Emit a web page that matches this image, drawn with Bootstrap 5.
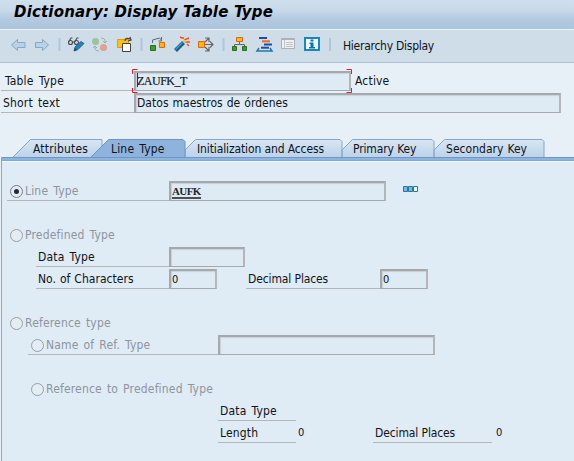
<!DOCTYPE html>
<html lang="en">
<head>
<meta charset="utf-8">
<meta name="viewport" content="width=device-width, initial-scale=1">
<title>Dictionary: Display Table Type</title>
<link href="https://cdn.jsdelivr.net/npm/bootstrap@5.3.0/dist/css/bootstrap.min.css" rel="stylesheet">
<style>
body{width:574px;height:461px;overflow:hidden;background:#e8f0f7;color:#101318;font:12px/16px "DejaVu Sans Condensed","DejaVu Sans",sans-serif;font-stretch:condensed;letter-spacing:.18px;word-spacing:1.4px;white-space:nowrap}
svg{display:block;flex:none}
.titlebar{height:29px;background:linear-gradient(#d0dfed 0,#c8d9e9 35%,#b3cae1 65%,#adc4de);padding:3px 0 0 14px}
.titlebar h1{font:italic bold 15px/19px "DejaVu Sans",sans-serif;font-stretch:normal;color:#000;margin:0;letter-spacing:.18px;word-spacing:0}
.tools{height:34px;background:#cfdde8;border-top:1px solid #edf4fa;border-bottom:1px solid #a9c0d5}
.hier{margin-left:11px;padding-top:8px;letter-spacing:-.26px;word-spacing:0}
.headform{height:76px;padding:6px 0 0 1px}
.frow{height:22px;display:flex;align-items:flex-end}
.lab{height:20px;border-bottom:1px solid #b4b7ba;padding-top:2px;flex:none;display:flex}
.field{height:20px;border:solid #a5a9ad;border-width:2px 2px 1px 2px;border-right-color:#b2b6ba;background:#deebf5;flex:none;padding:0 0 0 1px;box-shadow:inset 1px 1px 1px #c8d2da;position:relative}
.headform .lab{width:133px}
.mono{font:12px/16px "Liberation Serif",serif;letter-spacing:-.5px;-webkit-text-stroke:.2px #24272d}
.corners{position:absolute;left:-4px;top:-4px}
.tabrow{height:18px;position:relative}
.tabrow svg{position:absolute;left:0;top:0}
.tabrow span{position:relative;top:2px;flex:none}
.panel{height:304px;margin-left:1px;border-left:1px solid #88a9cb;background:linear-gradient(#6f97c4 1px,#8eb3dc 1px,#8eb3dc 3px,#83a8d2 3px,#83a8d2 4px,#f2f7fb 4px,#f2f7fb 5px,#dfebf5 5px);padding:22px 0 0 5px}
.opt{color:#8e959d}
.rad{width:13px;height:13px;border:1.5px solid #9a9fa4;border-radius:50%;background:#e4edf4;flex:none;margin:2px 2px 0 3px;display:flex;align-items:center;justify-content:center}
.rad.on{border-color:#777c84}
.rad.on i{width:5px;height:5px;border-radius:50%;background:#25283a}
.bare{border-color:transparent}
.pad{padding-left:2px}
.num{font-size:11px}
.w162{width:162px}.w133{width:133px}.w134{width:134px}.w190{width:190px}.w78{width:78px}.w119{width:119px}
.f48{width:48px}.f76{width:76px}.f77{width:77px}.f217{width:217px}.f427{width:427px}
.in1{margin-left:29px}.in2{margin-left:21px}.in3{margin-left:211px}
.snug{letter-spacing:.03px;word-spacing:.5px}
.tight{letter-spacing:-.12px;word-spacing:0}
.tab1{margin-left:33px;width:78px}.tab2{width:86px}.tab3{width:156px}.tab4{width:93px}
.code{font-size:11px;font-weight:bold;letter-spacing:-.6px;-webkit-text-stroke:0;border-bottom:2px solid #4a4e55;display:inline-block;height:16px;color:#24272d}
</style>
</head>
<body>
<header class="titlebar"><h1>Dictionary: Display Table Type</h1></header>
<div class="tools d-flex">
<svg width="320" height="32" viewBox="0 30 320 32" fill="none">
 <g fill="#b7d2e4" stroke="#86a9c4"><path d="M11.500 45l6-5.500v3h7.500v5h-7.500v3z"/><path d="M48.500 45l-6-5.500v3h-7v5h7v3z"/></g>
 <path d="M59.500 38v13M141.500 38v13M223.500 38v13" stroke="#afc5db" stroke-width="2"/>
 <g stroke="#454b50" stroke-width="1.100"><circle cx="70.500" cy="42.500" r="2"/><circle cx="76.500" cy="42.500" r="2"/><path d="M68.500 42l2.500-4h1.500M74.500 42l2.500-4h1.500M72 42h3"/></g>
 <path d="M74 51l1-4 6-5.500 3 2-6 6z" fill="#2482bd" stroke="#165b87" stroke-width=".8"/><path d="M74 51l1-3 2 2z" fill="#264257"/>
 <circle cx="95.500" cy="41.500" r="3.500" fill="#9bc49a"/><circle cx="103.500" cy="47.500" r="3.500" fill="#dfa095"/>
 <path d="M101 38c3 0 4 1 4 4m-2-1l2 2 2-2M99 51c-3 0-4-1-4-4m-2 1l2-2 2 2" stroke="#a4abaf"/>
 <path d="M117.500 39.500h11v8h-11z" fill="#ffc30b" stroke="#e39a0d"/><path d="M122.500 43.500h8v8h-8z" fill="#fff" stroke="#3e4347"/><path d="M125 41c0-3 2-3 6-2m-1-2l1 3-3 1" stroke="#454a4e" stroke-width="1.300"/>
 <path d="M150.500 45.500h5v5h-5z" fill="#43992d" stroke="#27711a"/><path d="M159.500 42.500h5v5h-5z" fill="#ffb512" stroke="#dc6a15"/><path d="M152.500 43v-3l7-2 2 2m0-3v4h-3" stroke="#62686d"/>
 <path d="M175.500 50.500l8-8" stroke="#175b8c" stroke-width="4"/><path d="M175.500 49.500l7-7" stroke="#439bd2" stroke-width="1.500"/>
 <path d="M184 40l5-2M185 42h5M183 39v-2M187 44l2 2M182 38l-2-1" stroke="#ef501e" stroke-width="1.500"/><circle cx="184.500" cy="41" r="1.500" fill="#ffc61a"/>
 <path d="M198.500 41.500h6v6h-6z" fill="#ffb512" stroke="#dc6a15"/><path d="M205 44.500h8m-3-3l3 3-3 3M205 42l4-4m-4 0h4v4M205 47l4 4m-4 0h4v-4" stroke="#62686d" stroke-width="1.200"/>
 <path d="M239.500 42v3m-5 2v-2.500h10V47" stroke="#62686d"/><path d="M236.500 37.500h6v4h-6z" fill="#ffbd16" stroke="#dc6a15"/><path d="M232.500 46.500h4v4h-4zM242.500 46.500h4v4h-4z" fill="#43992d" stroke="#27711a"/>
 <path d="M259 38h8M264 44.500h8" stroke="#234d9c" stroke-width="2"/><path d="M262 41.300h8" stroke="#e46b24" stroke-width="2"/><path d="M261 47.700h8" stroke="#234d9c" stroke-width="2"/><path d="M259 48l-2 3h15l-2-3" stroke="#1e7aa8" stroke-width="1.500"/>
 <path d="M281.500 38.500h13v10h-13z" fill="#eef0f2" stroke="#adb1b5"/><path d="M281 39.500h14" stroke="#afb3b7"/><path d="M284.500 40v8M286 42.500h7m-7 2h7m-7 2h7" stroke="#c0c4c8"/>
 <path d="M305 38h14v12h-14z" fill="#f2faff" stroke="#1688bd" stroke-width="2"/><path d="M310.500 39.500h3v2h-3zM309.500 42.500h4v4.500h1.500v1.500h-6V47h1.500v-3h-1z" fill="#0874ae"/>
</svg>
<svg width="12" height="32"><path d="M10 8v13" stroke="#afc5db" stroke-width="2"/></svg>
<span class="hier">Hierarchy Display</span>
</div>
<section class="headform">
 <div class="frow"><div class="lab ps-1">Table Type</div><div class="field f217"><span class="mono">ZAUFK_T</span>
  <svg class="corners" width="221" height="26" fill="none"><path d="M5.500 .5H.5V5M214.500 .5h5V5M.5 19v4.500h5M219.500 19v4.500h-5" stroke="#dd2029"/><path d="M5.500 4v14" stroke="#333"/></svg></div><div class="lab bare ps-1">Active</div></div>
 <div class="frow"><div class="lab pad">Short text</div><div class="field f427 snug">Datos maestros de órdenes</div></div>
</section>
<nav class="tabrow d-flex">
<svg width="574" height="18">
 <defs><linearGradient id="t" x2="0" y2="1"><stop stop-color="#d8e6f3"/><stop offset="1" stop-color="#bcd3ea"/></linearGradient></defs>
 <g fill="url(#t)" stroke="#86a6c8"><path d="M13 18L30.500.5H102V18M185 18v-7L195.500.5H340l2 2V18M342 18v-7L352.500.5H432l2 2V18M434 18v-7L444.500.5H542l2 2V18"/></g>
 <path d="M91 18L108.500.5H183l2 2V18" fill="#8eb3dc" stroke="#6f95c1"/>
</svg>
<span class="tab1">Attributes</span><span class="tab2">Line Type</span><span class="tab3 tight">Initialization and Access</span><span class="tab4 tight">Primary Key</span><span class="snug">Secondary Key</span>
</nav>
<main class="panel">
 <div class="frow"><div class="lab opt w162"><span class="rad on"><i></i></span>Line Type</div><div class="field f217"><span class="mono code">AUFK</span></div>
  <svg class="ms-3 mb-2" width="18" height="8"><path d="M1.500 1.500h4v5h-4zM6.500 1.500h4v5h-4z" fill="#80b7d9" stroke="#1d79a9"/><path d="M11.500 1.500h4v5h-4z" fill="#fff" stroke="#1d79a9"/></svg></div>
 <div class="frow"></div>
 <div class="frow"><div class="lab bare opt"><span class="rad"></span>Predefined Type</div></div>
 <div class="frow"><div class="lab in1 w133 pad">Data Type</div><div class="field f76"></div></div>
 <div class="frow"><div class="lab in1 w133 pad snug">No. of Characters</div><div class="field f48"><span class="num">0</span></div><div class="lab w134 pad in1 tight">Decimal Places</div><div class="field f48"><span class="num">0</span></div></div>
 <div class="frow"></div>
 <div class="frow"><div class="lab bare opt"><span class="rad"></span>Reference type</div></div>
 <div class="frow"><div class="lab opt in2 w190"><span class="rad"></span>Name of Ref. Type</div><div class="field f217"></div></div>
 <div class="frow"></div>
 <div class="frow"><div class="lab bare opt in2"><span class="rad"></span>Reference to Predefined Type</div></div>
 <div class="frow"><div class="lab in3 w78 pad">Data Type</div></div>
 <div class="frow"><div class="lab in3 w78 pad">Length</div><div class="lab bare pad f77"><span class="num">0</span></div><div class="lab w119 pad tight">Decimal Places</div><div class="lab bare ps-1"><span class="num">0</span></div></div>
</main>
<script src="https://cdn.jsdelivr.net/npm/bootstrap@5.3.0/dist/js/bootstrap.bundle.min.js"></script>
</body>
</html>
